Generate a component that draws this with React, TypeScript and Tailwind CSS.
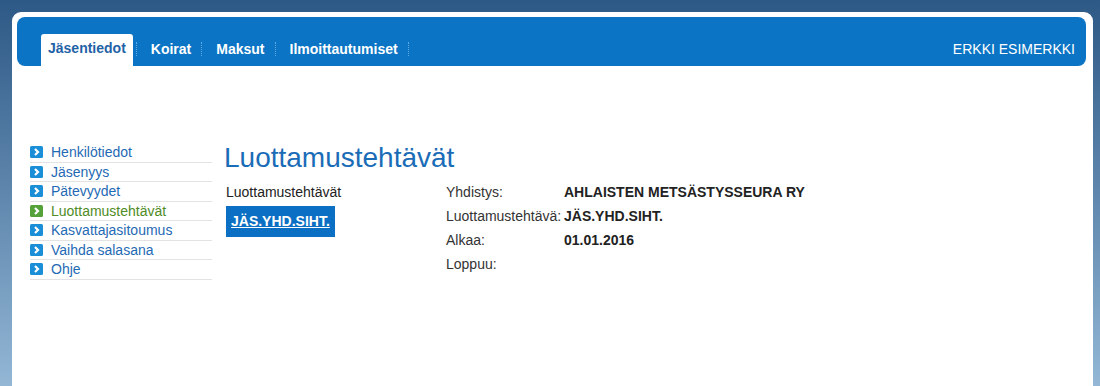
const navItems = ['Koirat', 'Maksut', 'Ilmoittautumiset'];

const sideItems = [
  { label: 'Henkilötiedot', active: false },
  { label: 'Jäsenyys', active: false },
  { label: 'Pätevyydet', active: false },
  { label: 'Luottamustehtävät', active: true },
  { label: 'Kasvattajasitoumus', active: false },
  { label: 'Vaihda salasana', active: false },
  { label: 'Ohje', active: false },
];

const details = [
  { label: 'Yhdistys:', value: 'AHLAISTEN METSÄSTYSSEURA RY' },
  { label: 'Luottamustehtävä:', value: 'JÄS.YHD.SIHT.' },
  { label: 'Alkaa:', value: '01.01.2016' },
  { label: 'Loppuu:', value: '' },
];

function Separator() {
  return <span className="h-[14px] border-l border-dotted border-[#5fa9e2]" />;
}

function ArrowIcon({ active }: { active: boolean }) {
  return (
    <svg width="13" height="12" viewBox="0 0 13 12" className="shrink-0">
      <rect width="13" height="12" rx="1.5" fill={active ? '#55a23a' : '#1a8ed6'} />
      <polyline points="5,3 8,6 5,9" fill="none" stroke="#fff" strokeWidth="2.2" />
    </svg>
  );
}

export default function App() {
  return (
    <div
      className="h-[386px] w-[1100px] overflow-hidden bg-gradient-to-b from-[#2d5986] to-[#93b7d5] pt-[12px] pl-[12px] pr-[7px]"
      style={{ fontFamily: '"Liberation Sans", Arial, sans-serif' }}
    >
      <div className="h-full rounded-t-[9px] bg-white pt-[5px] pl-[5px] pr-[7px]">
        {/* Top navigation bar */}
        <div className="flex h-[49px] items-end justify-between rounded-[8px] bg-[#0b74c4] pl-[24px] pr-[11px]">
          <div className="flex items-center">
            <div className="h-[32px] rounded-t-[3px] bg-white px-[7px] pt-[5px] text-[14px] font-bold leading-[18px] text-[#1f62a6]">
              Jäsentiedot
            </div>
            <div className="flex h-[32px] items-center pb-[3px]">
              <span className="ml-[3px]" />
              <Separator />
              {navItems.map((item) => (
                <div key={item} className="flex items-center">
                  <span className="ml-[14px] mr-[10px] text-[14px] font-bold leading-[18px] text-white">{item}</span>
                  <Separator />
                </div>
              ))}
            </div>
          </div>
          <div className="flex h-[32px] items-center pb-[3px] text-[14px] leading-[18px] text-white">ERKKI ESIMERKKI</div>
        </div>

        {/* Body */}
        <div className="mt-[77px] flex pl-[13px]">
          <ul className="w-[182px]">
            {sideItems.map((item) => (
              <li key={item.label} className="flex h-[19.5px] items-center gap-[8px] border-b border-[#e3e3e3] text-[14px] leading-[18px]">
                <ArrowIcon active={item.active} />
                <span className={item.active ? 'text-[#4f8c25]' : 'text-[#1f6ab4]'}>{item.label}</span>
              </li>
            ))}
          </ul>

          <div className="ml-[12px] flex-1">
            <h1 className="mt-[-1px] text-[28px] leading-[32px] text-[#1b6cb7]">Luottamustehtävät</h1>
            <div className="mt-[6px] flex">
              <div className="w-[222px] pl-[2px]">
                <div className="h-[24px] text-[14px] leading-[24px] text-[#222]">Luottamustehtävät</div>
                <div className="mt-[2px] inline-flex h-[31px] items-center bg-[#0b6fc3] px-[5px] text-[14px] font-bold text-white underline">
                  JÄS.YHD.SIHT.
                </div>
              </div>
              <div className="flex flex-col">
                {details.map((d) => (
                  <div key={d.label} className="flex h-[24px] items-center text-[14px] leading-[18px]">
                    <span className="w-[118px] text-[#333]">{d.label}</span>
                    <span className="font-bold text-[#222]">{d.value}</span>
                  </div>
                ))}
              </div>
            </div>
          </div>
        </div>
      </div>
    </div>
  );
}
